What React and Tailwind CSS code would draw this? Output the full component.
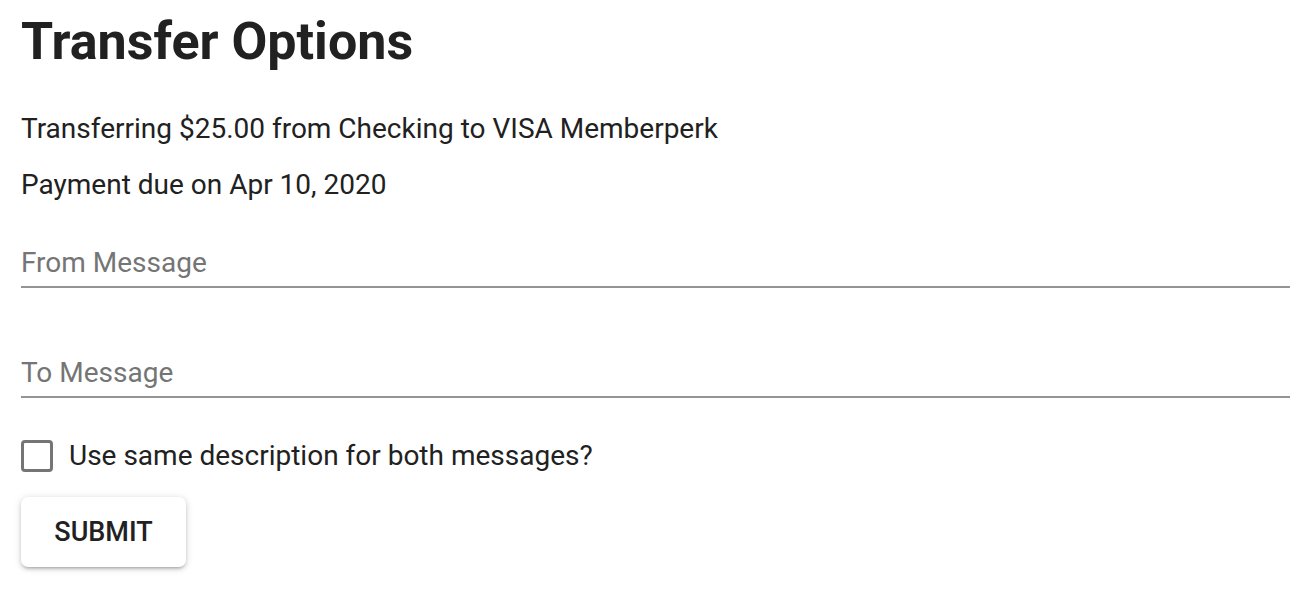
const Field = ({ label, className = '' }) => (
  <div className={`border-b-2 border-[#949494] pb-[3px] ${className}`}>
    <p className="text-[28px] leading-[40px] text-[#757575]">{label}</p>
  </div>
);

export default function App() {
  return (
    <div className="min-h-[590px] bg-white px-[21px] pr-[22px] font-['Roboto',sans-serif] text-[#212121]">
      <h1 className="pt-[10px] text-[52px] font-bold leading-[64px]">Transfer Options</h1>

      <p className="mt-[35px] text-[28px] leading-[40px]">
        Transferring $25.00 from Checking to VISA Memberperk
      </p>
      <p className="mt-[16px] text-[28px] leading-[40px]">Payment due on Apr 10, 2020</p>

      <Field label="From Message" className="mt-[38px]" />
      <Field label="To Message" className="mt-[65px]" />

      <label className="mt-[38px] flex h-[40px] items-center gap-[16px]">
        <span className="h-[32px] w-[32px] rounded-[4px] border-[3px] border-[#757575]" />
        <span className="text-[28px] leading-[40px]">Use same description for both messages?</span>
      </label>

      <button className="mt-[21px] flex h-[70px] w-[165px] items-center justify-center rounded-[7px] bg-white text-[27px] font-medium uppercase shadow-[0_3px_3px_-2px_rgba(0,0,0,0.2),0_2px_4px_0_rgba(0,0,0,0.14),0_1px_9px_0_rgba(0,0,0,0.12)]">
        Submit
      </button>
    </div>
  );
}
